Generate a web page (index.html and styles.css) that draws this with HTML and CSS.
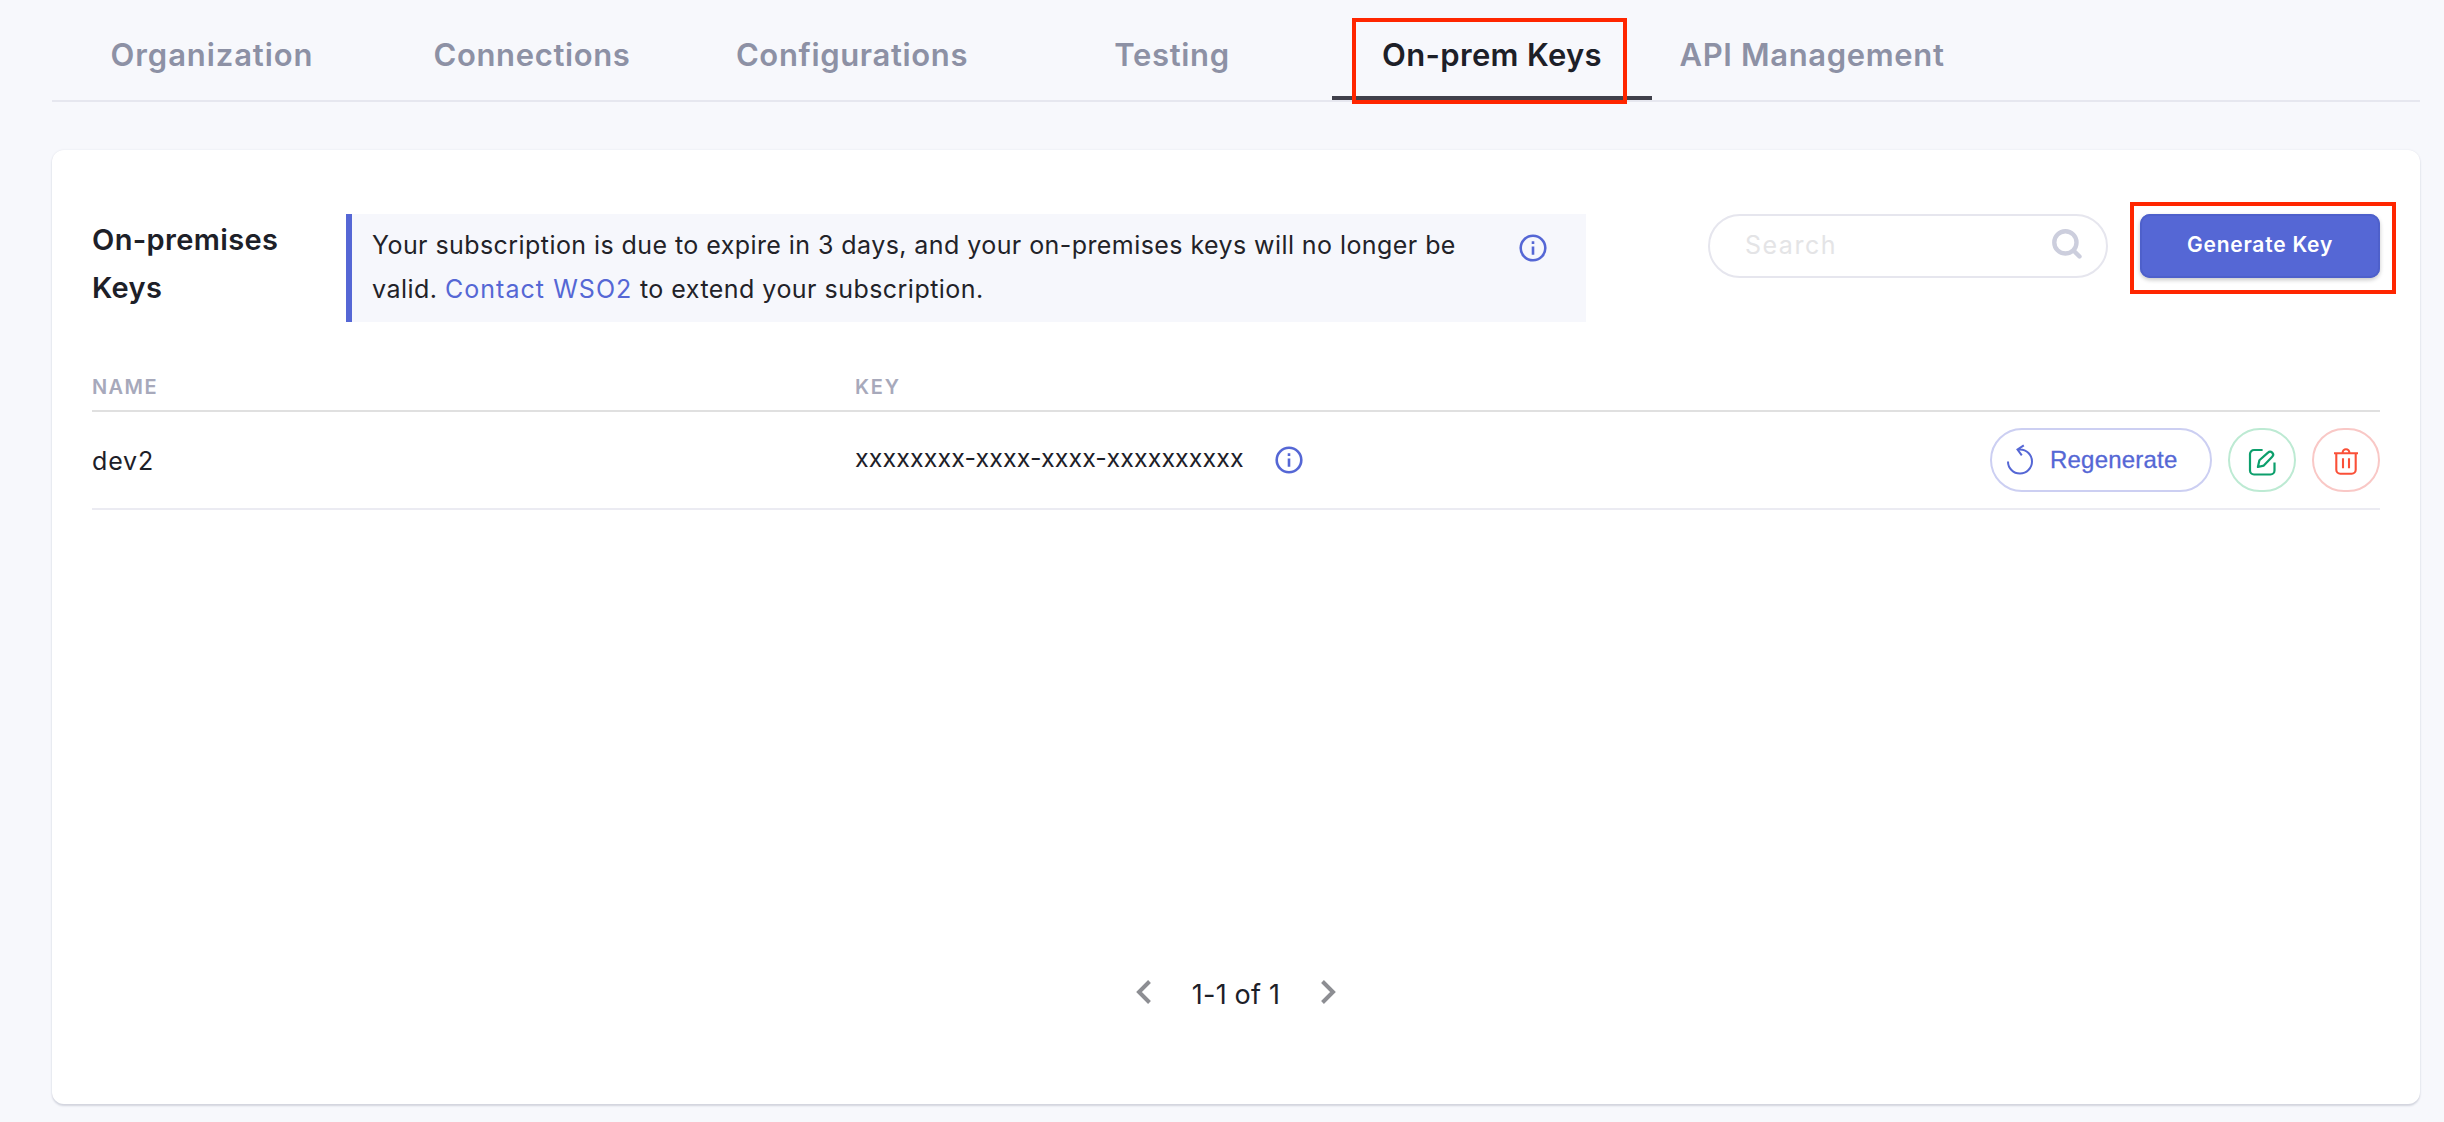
FILE: index.html
```html
<!DOCTYPE html>
<html lang="en">
<head>
<meta charset="utf-8">
<title>On-prem Keys</title>
<link rel="stylesheet" href="styles.css">
</head>
<body>
<nav class="tabs">
  <a class="tab tab-organization">Organization</a>
  <a class="tab">Connections</a>
  <a class="tab">Configurations</a>
  <a class="tab">Testing</a>
  <a class="tab tab-active">On-prem Keys</a>
  <a class="tab">API Management</a>
</nav>
<main class="card">
  <header class="card-header">
    <h1 class="title">On-premises Keys</h1>
    <div class="banner">
      <p class="banner-text"><span class="line-first">Your subscription is due to expire in 3 days, and your on-premises keys will no longer be</span> <span class="line-last">valid. <a class="link">Contact WSO2</a> to extend your subscription.</span></p>
      <svg class="info banner-info" viewBox="0 0 28 28"><circle cx="14" cy="14" r="12.3"/><path d="M14 12.6v8.2M14 7.2v2.7"/></svg>
    </div>
    <div class="search">
      <span class="search-text">Search</span>
      <svg class="search-icon" viewBox="0 0 30 30"><circle cx="13.4" cy="13.4" r="11.1"/><path d="M21.5 21.5l6 6"/></svg>
    </div>
    <button class="generate">Generate Key</button>
  </header>
  <div class="row row-head">
    <span class="head-name">NAME</span>
    <span class="head-key">KEY</span>
  </div>
  <div class="row row-body">
    <span class="name">dev2</span>
    <div class="key-cell">
      <span class="key">xxxxxxxx-xxxx-xxxx-xxxxxxxxxx</span>
      <svg class="info" viewBox="0 0 28 28"><circle cx="14" cy="14" r="12.3"/><path d="M14 12.6v8.2M14 7.2v2.7"/></svg>
    </div>
    <div class="actions">
      <button class="pill regenerate">
        <svg class="icon-regenerate" viewBox="0 0 28 32"><path d="M2 17.4a12 12 0 1 0 12-11.9h-2.5M17.8 1.3l-6.3 4.2 4.3 5.9"/></svg>
        <span>Regenerate</span>
      </button>
      <button class="pill edit">
        <svg class="icon-edit" viewBox="0 0 28 28"><path d="M14.6 2H6a4 4 0 0 0-4 4v16.500a4 4 0 0 0 4 4h16.500a4 4 0 0 0 4-4V14.500M9.900 19l1.500-6.700 8.600-7.700a2.900 2.900 0 0 1 4.200 4.200L15.800 17.600z"/></svg>
      </button>
      <button class="pill delete">
        <svg class="icon-delete" viewBox="0 0 26 28"><path d="M1 6.200h24M3.300 6.200v16.600a4 4 0 0 0 4 4h11.400a4 4 0 0 0 4-4V6.200M9.600 6a3.400 3.800 0 0 1 6.800 0M10 11.200v10M16 11.200v10"/></svg>
      </button>
    </div>
  </div>
  <footer class="pagination">
    <svg class="chevron" viewBox="0 0 16 24"><path d="M13.500 1.500L3 12l10.500 10.500"/></svg>
    <span class="range">1-1 of 1</span>
    <svg class="chevron" viewBox="0 0 16 24"><path d="M2.500 1.500L13 12 2.500 22.500"/></svg>
  </footer>
</main>
</body>
</html>
```
FILE: styles.css
```css
*, *::before, *::after { box-sizing: border-box; }

body {
  margin: 0;
  height: 1122px;
  padding: 0 24px 18px 52px;
  display: flex;
  flex-direction: column;
  gap: 48px;
  background: #f7f8fc;
  color: #1d2028;
  font-family: "Inter", "Liberation Sans", sans-serif;
  overflow: hidden;
}

svg { display: block; flex: none; fill: none; stroke-linecap: butt; }
button { font: inherit; margin: 0; padding: 0; background: none; }

.tabs {
  display: flex;
  height: 102px;
  flex: none;
  border-bottom: 2px solid #e6e7ef;
}
.tab {
  position: relative;
  width: 320px;
  padding-top: 37px;
  text-align: center;
  font-size: 31px;
  font-weight: 600;
  line-height: 36px;
  letter-spacing: .65px;
  color: #8d91a5;
}
.tab-organization { letter-spacing: .9px; }
.tab-active {
  color: #1d2028;
  letter-spacing: .35px;
  border-bottom: 4px solid #40404b;
}
.tab-active::after {
  content: "";
  position: absolute;
  left: 20px;
  top: 18px;
  width: 275px;
  height: 86px;
  border: 4px solid #ff2600;
}

.card {
  flex: 1;
  display: flex;
  flex-direction: column;
  padding: 64px 40px 90px;
  background: #fff;
  border-radius: 12px;
  box-shadow: 0 2px 2px #d2d4de, 0 0 2px #e0e2ea;
}
.card-header { display: flex; height: 108px; }
.title {
  width: 254px;
  margin: 2px 0 0;
  padding-right: 60px;
  font-size: 29px;
  font-weight: 600;
  line-height: 48px;
  letter-spacing: .35px;
}
.banner {
  display: flex;
  justify-content: space-between;
  width: 1240px;
  padding: 9px 39px 0 20px;
  border-left: 6px solid #5567d5;
  background: #f6f7fc;
  color: #222228;
}
.banner-text { margin: 0; font-size: 25px; line-height: 44px; }
.line-first { display: block; white-space: nowrap; letter-spacing: .43px; }
.line-last { display: block; letter-spacing: .47px; }
.link { color: #5567d5; letter-spacing: 1.05px; }
.info { width: 28px; height: 28px; stroke: #5567d5; stroke-width: 2.6; }
.banner-info { margin-top: 11px; }

.search {
  display: flex;
  align-items: center;
  justify-content: space-between;
  width: 400px;
  height: 64px;
  margin-left: 122px;
  padding: 0 24px 2px 35px;
  border: 2px solid #e6e6ee;
  border-radius: 32px;
}
.search-text { font-size: 25px; letter-spacing: 1.5px; color: #e4e4e6; }
.search-icon { width: 30px; height: 30px; margin-bottom: 2px; stroke: #cccedd; stroke-width: 4.4; stroke-linecap: round; }

.generate {
  position: relative;
  width: 240px;
  height: 64px;
  margin-left: 32px;
  padding-bottom: 3px;
  border: 0;
  border-radius: 10px;
  background: #5567d5;
  box-shadow: 0 2px 4px rgba(0, 0, 0, .22), inset 0 0 0 2px #4e60cb;
  color: #fff;
  font-size: 21px;
  font-weight: 600;
  letter-spacing: .77px;
}
.generate::after {
  content: "";
  position: absolute;
  left: -10px;
  top: -12px;
  width: 266px;
  height: 92px;
  border: 4px solid #ff2600;
}

.row { display: grid; grid-template-columns: 763px 1fr auto; }
.row-head {
  height: 90px;
  padding-top: 53px;
  border-bottom: 2px solid #e0e0e0;
  color: #a7a9bb;
  font-size: 20px;
  font-weight: 600;
  line-height: 24px;
}
.head-name { letter-spacing: 1.4px; }
.head-key { letter-spacing: 1.8px; }
.row-body {
  height: 98px;
  align-items: center;
  border-bottom: 2px solid #ebebf2;
  font-size: 25px;
  line-height: 32px;
}
.name { padding-top: 2px; letter-spacing: .85px; }
.key-cell { display: flex; align-items: center; gap: 31px; }
.key { padding-bottom: 5px; letter-spacing: .1px; }
.actions { display: flex; gap: 16px; }
.pill {
  display: flex;
  align-items: center;
  justify-content: center;
  width: 68px;
  height: 64px;
  border: 2px solid;
  border-radius: 32px;
}
.regenerate {
  justify-content: flex-start;
  gap: 16px;
  width: 222px;
  padding-left: 14px;
  border-color: #cccff2;
  color: #5567d5;
  font-family: "Liberation Sans", Arial, sans-serif;
  font-size: 24px;
  letter-spacing: .2px;
  -webkit-text-stroke: .3px;
}
.icon-regenerate { width: 28px; height: 32px; stroke: #5567d5; stroke-width: 2; }
.edit { border-color: #bdead3; }
.icon-edit { width: 28px; height: 28px; margin-top: 3px; stroke: #0c9f6c; stroke-width: 2.2; stroke-linejoin: round; }
.delete { border-color: #f9c8c6; }
.icon-delete { width: 26px; height: 28px; margin-top: 1px; stroke: #fa5038; stroke-width: 2.1; }

.pagination {
  display: flex;
  align-items: center;
  justify-content: center;
  gap: 40px;
  height: 40px;
  margin-top: auto;
}
.chevron { width: 16px; height: 24px; margin-bottom: 5px; stroke: #8d8e93; stroke-width: 4; }
.range { font-size: 27px; letter-spacing: .2px; }
```
